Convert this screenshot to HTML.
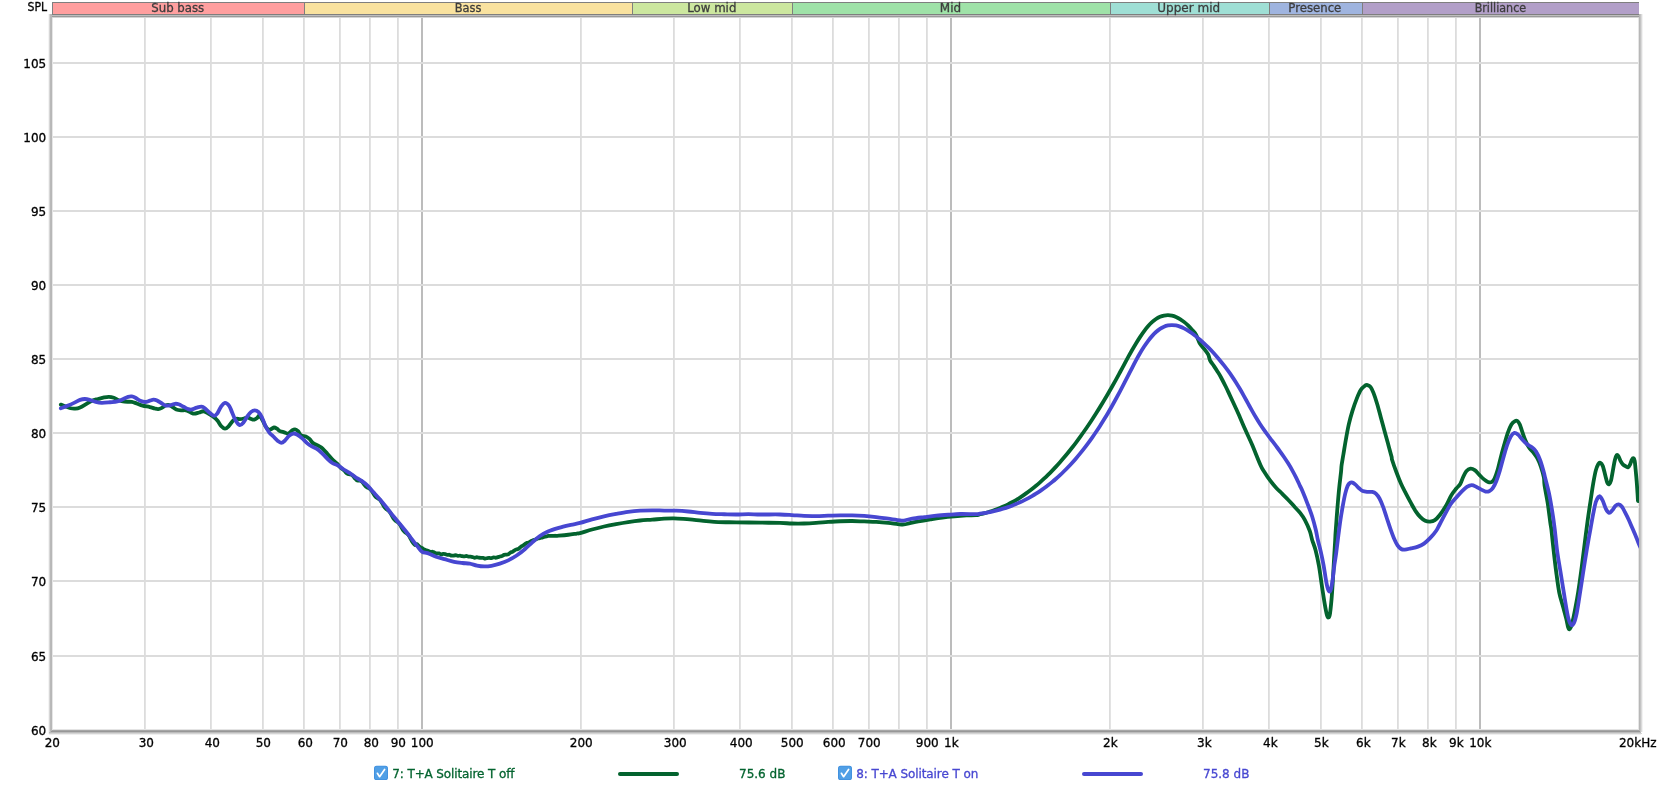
<!DOCTYPE html>
<html lang="en">
<head>
<meta charset="utf-8">
<title>SPL</title>
<style>
html,body{margin:0;padding:0;background:#fff;}
body{width:1665px;height:790px;overflow:hidden;position:relative;}
svg{position:absolute;left:0;top:0;display:block;will-change:transform;}
text{font-family:"DejaVu Sans", "Liberation Sans", sans-serif;font-size:12px;stroke-width:0.3px;paint-order:stroke fill;}
.ax{fill:#000;stroke:#000;}
.band{fill:#3c3c3c;stroke:#3c3c3c;}
.lg{fill:#03632e;stroke:#03632e;}
.lb{fill:#4747d1;stroke:#4747d1;}
</style>
</head>
<body>
<svg width="1665" height="790" viewBox="0 0 1665 790">
<rect x="0" y="0" width="1665" height="790" fill="#ffffff"/>
<g shape-rendering="crispEdges">
<rect x="144" y="17" width="1" height="713" fill="#dcdcdc"/><rect x="145" y="17" width="1" height="713" fill="#e3e3e3"/>
<rect x="210" y="17" width="1" height="713" fill="#dcdcdc"/><rect x="211" y="17" width="1" height="713" fill="#e3e3e3"/>
<rect x="262" y="17" width="1" height="713" fill="#dcdcdc"/><rect x="263" y="17" width="1" height="713" fill="#e3e3e3"/>
<rect x="303" y="17" width="1" height="713" fill="#dcdcdc"/><rect x="304" y="17" width="1" height="713" fill="#e3e3e3"/>
<rect x="339" y="17" width="1" height="713" fill="#dcdcdc"/><rect x="340" y="17" width="1" height="713" fill="#e3e3e3"/>
<rect x="369" y="17" width="1" height="713" fill="#dcdcdc"/><rect x="370" y="17" width="1" height="713" fill="#e3e3e3"/>
<rect x="397" y="17" width="1" height="713" fill="#dcdcdc"/><rect x="398" y="17" width="1" height="713" fill="#e3e3e3"/>
<rect x="580" y="17" width="1" height="713" fill="#dcdcdc"/><rect x="581" y="17" width="1" height="713" fill="#e3e3e3"/>
<rect x="673" y="17" width="1" height="713" fill="#dcdcdc"/><rect x="674" y="17" width="1" height="713" fill="#e3e3e3"/>
<rect x="739" y="17" width="1" height="713" fill="#dcdcdc"/><rect x="740" y="17" width="1" height="713" fill="#e3e3e3"/>
<rect x="791" y="17" width="1" height="713" fill="#dcdcdc"/><rect x="792" y="17" width="1" height="713" fill="#e3e3e3"/>
<rect x="832" y="17" width="1" height="713" fill="#dcdcdc"/><rect x="833" y="17" width="1" height="713" fill="#e3e3e3"/>
<rect x="868" y="17" width="1" height="713" fill="#dcdcdc"/><rect x="869" y="17" width="1" height="713" fill="#e3e3e3"/>
<rect x="898" y="17" width="1" height="713" fill="#dcdcdc"/><rect x="899" y="17" width="1" height="713" fill="#e3e3e3"/>
<rect x="926" y="17" width="1" height="713" fill="#dcdcdc"/><rect x="927" y="17" width="1" height="713" fill="#e3e3e3"/>
<rect x="1109" y="17" width="1" height="713" fill="#dcdcdc"/><rect x="1110" y="17" width="1" height="713" fill="#e3e3e3"/>
<rect x="1202" y="17" width="1" height="713" fill="#dcdcdc"/><rect x="1203" y="17" width="1" height="713" fill="#e3e3e3"/>
<rect x="1268" y="17" width="1" height="713" fill="#dcdcdc"/><rect x="1269" y="17" width="1" height="713" fill="#e3e3e3"/>
<rect x="1320" y="17" width="1" height="713" fill="#dcdcdc"/><rect x="1321" y="17" width="1" height="713" fill="#e3e3e3"/>
<rect x="1361" y="17" width="1" height="713" fill="#dcdcdc"/><rect x="1362" y="17" width="1" height="713" fill="#e3e3e3"/>
<rect x="1397" y="17" width="1" height="713" fill="#dcdcdc"/><rect x="1398" y="17" width="1" height="713" fill="#e3e3e3"/>
<rect x="1427" y="17" width="1" height="713" fill="#dcdcdc"/><rect x="1428" y="17" width="1" height="713" fill="#e3e3e3"/>
<rect x="1455" y="17" width="1" height="713" fill="#dcdcdc"/><rect x="1456" y="17" width="1" height="713" fill="#e3e3e3"/>
<rect x="421" y="17" width="2" height="713" fill="#bcbcbc"/>
<rect x="950" y="17" width="2" height="713" fill="#bcbcbc"/>
<rect x="1479" y="17" width="2" height="713" fill="#bcbcbc"/>
<rect x="52" y="62" width="1587" height="2" fill="#dcdcdc"/>
<rect x="52" y="136" width="1587" height="2" fill="#dcdcdc"/>
<rect x="52" y="210" width="1587" height="2" fill="#dcdcdc"/>
<rect x="52" y="284" width="1587" height="2" fill="#dcdcdc"/>
<rect x="52" y="358" width="1587" height="2" fill="#dcdcdc"/>
<rect x="52" y="432" width="1587" height="2" fill="#dcdcdc"/>
<rect x="52" y="506" width="1587" height="2" fill="#dcdcdc"/>
<rect x="52" y="580" width="1587" height="2" fill="#dcdcdc"/>
<rect x="52" y="655" width="1587" height="2" fill="#dcdcdc"/>
</g>
<g shape-rendering="crispEdges">
<rect x="48" y="14" width="1" height="720" fill="#f4f4f4"/>
<rect x="49" y="14" width="1" height="720" fill="#d6d6d6"/>
<rect x="50" y="14" width="1" height="720" fill="#b9b9b9"/>
<rect x="51" y="14" width="1" height="720" fill="#b7b7b7"/>
<rect x="52" y="14" width="1" height="720" fill="#e6e6e6"/>
<rect x="1638" y="14" width="1" height="718" fill="#e6e6e6"/>
<rect x="1639" y="14" width="1" height="718" fill="#b7b7b7"/>
<rect x="1640" y="14" width="1" height="718" fill="#c4c4c4"/>
<rect x="1641" y="14" width="1" height="718" fill="#dadada"/>
<rect x="1642" y="14" width="1" height="718" fill="#f2f2f2"/>
<rect x="52" y="15" width="1587" height="1" fill="#bebebe"/>
<rect x="52" y="16" width="1587" height="1" fill="#9a9a9a"/>
<rect x="52" y="17" width="1587" height="1" fill="#d4d4d4"/>
<rect x="53" y="729" width="1585" height="1" fill="#e4e4e4"/>
<rect x="52" y="730" width="1587" height="1" fill="#a6a6a6"/>
<rect x="51" y="731" width="1589" height="1" fill="#979797"/>
<rect x="49" y="732" width="1592" height="1" fill="#bcbcbc"/>
<rect x="49" y="733" width="1593" height="1" fill="#d4d4d4"/>
<rect x="49" y="734" width="1592" height="1" fill="#efefef"/>
</g>
<clipPath id="pc"><rect x="52" y="17" width="1587" height="713"/></clipPath>
<g clip-path="url(#pc)" fill="none" stroke-width="3.8" stroke-linejoin="round" stroke-linecap="round">
<path stroke="#03632e" d="M60.82 404.65C61.62 404.95 64.03 405.86 65.63 406.46C67.23 407.06 68.83 407.90 70.44 408.26C72.05 408.62 73.66 408.76 75.26 408.62C76.87 408.48 78.27 408.18 80.07 407.42C81.87 406.66 84.08 405.17 86.08 404.05C88.08 402.93 90.09 401.53 92.09 400.69C94.09 399.85 96.11 399.54 98.11 399.00C100.11 398.46 102.32 397.80 104.12 397.44C105.92 397.08 107.33 396.78 108.93 396.84C110.53 396.90 112.14 397.24 113.74 397.80C115.34 398.36 116.75 399.56 118.55 400.20C120.35 400.84 122.36 401.37 124.56 401.65C126.77 401.93 129.78 401.59 131.78 401.89C133.78 402.19 134.79 402.83 136.59 403.45C138.39 404.07 140.39 405.02 142.60 405.62C144.81 406.22 147.81 406.58 149.82 407.06C151.82 407.54 153.23 408.16 154.63 408.50C156.03 408.84 157.04 409.20 158.24 409.10C159.44 409.00 160.65 408.50 161.85 407.90C163.05 407.30 164.25 405.98 165.45 405.50C166.65 405.02 167.86 404.76 169.06 405.02C170.26 405.28 171.47 406.32 172.67 407.06C173.87 407.80 174.88 408.92 176.28 409.46C177.68 410.00 179.49 410.17 181.09 410.31C182.69 410.45 184.30 409.95 185.90 410.31C187.50 410.67 189.31 411.91 190.71 412.47C192.11 413.03 192.92 413.67 194.32 413.67C195.72 413.67 197.63 412.87 199.13 412.47C200.63 412.07 201.94 411.17 203.34 411.27C204.74 411.37 206.05 412.27 207.55 413.07C209.05 413.87 210.76 414.88 212.36 416.08C213.96 417.28 215.67 418.59 217.17 420.29C218.67 421.99 220.08 424.90 221.38 426.30C222.68 427.70 223.78 428.71 224.98 428.71C226.18 428.71 227.29 427.60 228.59 426.30C229.89 425.00 231.50 422.15 232.80 420.89C234.10 419.63 235.26 419.03 236.41 418.73C237.56 418.43 238.44 419.13 239.69 419.09C240.94 419.05 242.60 418.78 243.90 418.48C245.20 418.18 246.40 417.24 247.50 417.28C248.60 417.32 249.41 418.33 250.51 418.73C251.61 419.13 253.02 419.83 254.12 419.69C255.22 419.55 256.23 418.58 257.13 417.88C258.03 417.18 258.63 415.08 259.53 415.48C260.43 415.88 261.54 418.49 262.54 420.29C263.54 422.09 264.64 424.80 265.54 426.30C266.44 427.80 267.15 428.77 267.95 429.31C268.75 429.85 269.35 429.85 270.35 429.55C271.35 429.25 272.86 427.64 273.96 427.50C275.06 427.36 275.97 428.11 276.97 428.71C277.97 429.31 278.78 430.51 279.98 431.11C281.18 431.71 282.79 431.92 284.19 432.32C285.59 432.72 287.09 433.82 288.39 433.52C289.69 433.22 290.90 431.21 292.00 430.51C293.10 429.81 294.01 429.21 295.01 429.31C296.01 429.41 297.02 430.11 298.02 431.11C299.02 432.11 299.72 434.42 301.02 435.32C302.32 436.22 304.43 435.92 305.83 436.52C307.23 437.12 308.24 437.83 309.44 438.93C310.64 440.03 311.45 441.94 313.05 443.14C314.65 444.34 317.46 445.25 319.06 446.15C320.66 447.05 321.27 447.25 322.67 448.55C324.07 449.85 325.88 452.16 327.48 453.96C329.08 455.76 330.69 457.77 332.29 459.37C333.89 460.97 335.70 462.18 337.10 463.58C338.50 464.98 339.53 466.64 340.71 467.79C341.89 468.94 343.36 469.74 344.20 470.49C345.04 471.24 345.23 471.77 345.75 472.31C346.27 472.85 346.78 473.39 347.30 473.71C347.82 474.03 348.33 474.10 348.85 474.22C349.37 474.34 349.88 474.28 350.40 474.42C350.92 474.56 351.43 474.69 351.95 475.05C352.47 475.41 352.98 475.98 353.50 476.57C354.02 477.16 354.53 478.01 355.05 478.59C355.57 479.17 356.08 479.72 356.60 480.06C357.12 480.40 357.63 480.53 358.15 480.63C358.67 480.73 359.18 480.61 359.70 480.68C360.22 480.75 360.73 480.74 361.25 481.07C361.77 481.40 362.28 482.02 362.80 482.64C363.32 483.25 363.83 484.11 364.35 484.76C364.87 485.41 365.38 486.10 365.90 486.56C366.42 487.02 366.93 487.25 367.45 487.55C367.97 487.85 368.48 488.05 369.00 488.37C369.52 488.69 370.03 488.97 370.55 489.49C371.07 490.01 371.58 490.71 372.10 491.47C372.62 492.23 373.13 493.23 373.65 494.04C374.17 494.86 374.68 495.73 375.20 496.36C375.72 496.99 376.23 497.44 376.75 497.82C377.27 498.20 377.78 498.33 378.30 498.66C378.82 498.99 379.33 499.25 379.85 499.79C380.37 500.33 380.88 501.07 381.40 501.87C381.92 502.67 382.43 503.72 382.95 504.59C383.47 505.46 383.98 506.39 384.50 507.10C385.02 507.81 385.53 508.35 386.05 508.84C386.57 509.32 387.08 509.59 387.60 510.01C388.12 510.43 388.63 510.76 389.15 511.35C389.67 511.94 390.18 512.71 390.70 513.53C391.22 514.35 391.73 515.40 392.25 516.29C392.77 517.17 393.28 518.13 393.80 518.84C394.32 519.55 394.83 520.11 395.35 520.57C395.87 521.03 396.38 521.23 396.90 521.60C397.42 521.97 397.93 522.24 398.45 522.77C398.97 523.30 399.48 523.98 400.00 524.76C400.52 525.54 401.03 526.58 401.55 527.46C402.07 528.35 402.58 529.33 403.10 530.07C403.62 530.81 404.13 531.39 404.65 531.88C405.17 532.37 405.68 532.59 406.20 532.98C406.72 533.38 407.23 533.70 407.75 534.25C408.27 534.80 408.78 535.50 409.30 536.31C409.82 537.12 410.33 538.18 410.85 539.11C411.37 540.04 411.88 541.09 412.40 541.88C412.92 542.67 413.43 543.34 413.95 543.88C414.47 544.42 415.02 545.09 415.50 545.13C415.98 545.17 416.42 544.10 416.84 544.12C417.26 544.14 417.46 544.78 418.00 545.27C418.54 545.76 419.40 546.57 420.10 547.05C420.80 547.53 421.50 547.74 422.20 548.16C422.90 548.58 423.60 549.22 424.30 549.57C425.00 549.93 425.70 550.05 426.40 550.29C427.10 550.53 427.80 550.74 428.50 551.01C429.20 551.28 429.90 551.80 430.60 551.93C431.30 552.06 432.00 551.64 432.70 551.77C433.40 551.90 434.10 552.43 434.80 552.69C435.50 552.96 436.20 553.23 436.90 553.36C437.60 553.49 438.30 553.30 439.00 553.46C439.70 553.62 440.40 554.22 441.10 554.30C441.80 554.38 442.50 553.97 443.20 553.95C443.90 553.93 444.60 554.03 445.30 554.18C446.00 554.33 446.70 554.75 447.40 554.85C448.10 554.95 448.80 554.65 449.50 554.78C450.20 554.91 450.90 555.49 451.60 555.62C452.30 555.75 453.00 555.63 453.70 555.57C454.40 555.51 455.10 555.21 455.80 555.26C456.50 555.31 457.20 555.80 457.90 555.86C458.60 555.92 459.30 555.58 460.00 555.63C460.70 555.68 461.40 556.04 462.10 556.18C462.80 556.32 463.50 556.49 464.20 556.46C464.90 556.43 465.60 555.97 466.30 556.00C467.00 556.03 467.70 556.54 468.40 556.65C469.10 556.76 469.80 556.58 470.50 556.65C471.20 556.72 471.90 556.87 472.60 557.05C473.30 557.23 474.00 557.73 474.70 557.76C475.40 557.79 476.10 557.27 476.80 557.26C477.50 557.25 478.20 557.61 478.90 557.71C479.60 557.82 480.30 557.87 481.00 557.89C481.70 557.91 482.40 557.74 483.10 557.85C483.80 557.96 484.50 558.54 485.20 558.57C485.90 558.60 486.60 558.13 487.30 558.03C488.00 557.93 488.70 557.94 489.40 557.95C490.10 557.96 490.80 558.17 491.50 558.07C492.20 557.97 492.90 557.40 493.60 557.35C494.30 557.30 495.00 557.77 495.70 557.74C496.40 557.71 497.10 557.40 497.80 557.19C498.50 556.98 499.20 556.67 499.90 556.48C500.60 556.29 501.30 556.34 502.00 556.07C502.70 555.80 503.40 555.08 504.10 554.85C504.80 554.62 505.50 554.78 506.20 554.67C506.90 554.56 507.60 554.53 508.30 554.18C509.00 553.83 509.70 552.96 510.40 552.57C511.10 552.18 511.80 552.21 512.50 551.83C513.20 551.45 513.90 550.71 514.60 550.30C515.30 549.89 516.00 549.67 516.70 549.39C517.40 549.11 518.10 549.05 518.80 548.60C519.50 548.15 520.20 547.21 520.90 546.71C521.60 546.21 522.30 546.04 523.00 545.59C523.70 545.14 524.40 544.46 525.10 543.99C525.80 543.52 526.50 543.04 527.20 542.76C527.90 542.48 528.60 542.60 529.30 542.30C530.00 542.00 530.70 541.32 531.40 540.96C532.10 540.60 532.80 540.41 533.50 540.16C534.20 539.91 534.90 539.74 535.60 539.45C536.30 539.16 537.00 538.66 537.70 538.44C538.40 538.22 539.10 538.30 539.80 538.15C540.50 538.00 541.20 537.75 541.90 537.55C542.60 537.35 543.30 537.12 544.00 536.95C544.70 536.78 545.40 536.69 546.10 536.50C546.80 536.31 547.50 535.90 548.20 535.80C548.90 535.70 549.60 535.87 550.30 535.88C551.00 535.89 551.70 535.90 552.40 535.88C553.10 535.86 553.80 535.80 554.50 535.78C555.20 535.76 555.90 535.79 556.60 535.78C557.30 535.76 556.74 535.86 558.70 535.69C560.66 535.52 565.36 535.10 568.37 534.74C571.38 534.38 574.85 533.81 576.79 533.54C578.73 533.27 577.46 533.81 580.00 533.14C582.54 532.47 588.02 530.63 592.03 529.53C596.04 528.43 600.04 527.42 604.05 526.52C608.06 525.62 612.07 524.86 616.08 524.12C620.09 523.38 624.10 522.67 628.11 522.07C632.12 521.47 636.12 520.91 640.13 520.51C644.14 520.11 648.15 519.97 652.16 519.67C656.17 519.37 660.58 518.91 664.19 518.71C667.80 518.51 670.60 518.43 673.81 518.47C677.02 518.51 680.02 518.71 683.43 518.95C686.84 519.19 690.44 519.55 694.25 519.91C698.06 520.27 702.27 520.75 706.28 521.11C710.29 521.47 713.29 521.87 718.30 522.07C723.31 522.27 729.32 522.22 736.34 522.32C743.36 522.42 753.12 522.58 760.40 522.68C767.68 522.78 774.73 522.78 780.00 522.92C785.27 523.06 788.02 523.42 792.03 523.52C796.04 523.62 800.04 523.62 804.05 523.52C808.06 523.42 812.07 523.18 816.08 522.92C820.09 522.66 824.10 522.23 828.11 521.95C832.12 521.67 836.12 521.39 840.13 521.23C844.14 521.07 848.15 520.95 852.16 520.99C856.17 521.03 860.18 521.31 864.19 521.47C868.20 521.63 872.20 521.71 876.21 521.95C880.22 522.19 884.63 522.56 888.24 522.92C891.85 523.28 895.25 523.86 897.86 524.12C900.47 524.38 901.87 524.64 903.87 524.48C905.88 524.32 907.49 523.68 909.89 523.16C912.29 522.64 914.89 521.99 918.30 521.35C921.71 520.71 926.32 519.95 930.33 519.31C934.34 518.67 938.35 518.00 942.36 517.50C946.37 517.00 950.37 516.64 954.38 516.30C958.39 515.96 962.81 515.66 966.41 515.46C970.01 515.26 973.74 515.31 976.00 515.11C978.26 514.91 978.67 514.57 980.00 514.27C981.33 513.97 982.67 513.64 984.00 513.30C985.33 512.95 986.67 512.59 988.00 512.20C989.33 511.81 990.67 511.40 992.00 510.96C993.33 510.52 994.67 510.05 996.00 509.56C997.33 509.07 998.67 508.55 1000.00 508.00C1001.33 507.45 1002.67 506.88 1004.00 506.28C1005.33 505.68 1006.67 505.04 1008.00 504.38C1009.33 503.72 1010.67 503.02 1012.00 502.29C1013.33 501.56 1014.67 500.81 1016.00 500.02C1017.33 499.23 1018.67 498.41 1020.00 497.55C1021.33 496.69 1022.67 495.81 1024.00 494.89C1025.33 493.97 1026.67 493.02 1028.00 492.04C1029.33 491.06 1030.67 490.04 1032.00 488.99C1033.33 487.94 1034.67 486.87 1036.00 485.76C1037.33 484.65 1038.67 483.50 1040.00 482.32C1041.33 481.14 1042.67 479.93 1044.00 478.69C1045.33 477.45 1046.67 476.17 1048.00 474.86C1049.33 473.55 1050.67 472.21 1052.00 470.84C1053.33 469.47 1054.67 468.06 1056.00 466.62C1057.33 465.18 1058.67 463.71 1060.00 462.20C1061.33 460.69 1062.67 459.15 1064.00 457.58C1065.33 456.01 1066.67 454.40 1068.00 452.76C1069.33 451.12 1070.67 449.45 1072.00 447.75C1073.33 446.05 1074.67 444.31 1076.00 442.54C1077.33 440.77 1078.67 438.97 1080.00 437.13C1081.33 435.29 1082.67 433.42 1084.00 431.52C1085.33 429.62 1086.67 427.69 1088.00 425.72C1089.33 423.75 1090.67 421.75 1092.00 419.72C1093.33 417.69 1094.67 415.62 1096.00 413.52C1097.33 411.42 1098.67 409.29 1100.00 407.13C1101.33 404.97 1102.67 402.77 1104.00 400.54C1105.33 398.31 1106.67 396.05 1108.00 393.75C1109.33 391.45 1110.67 389.13 1112.00 386.77C1113.33 384.41 1114.67 382.01 1116.00 379.59C1117.33 377.17 1118.67 374.70 1120.00 372.24C1121.33 369.78 1122.67 367.28 1124.00 364.81C1125.33 362.34 1126.67 359.86 1128.00 357.44C1129.33 355.02 1130.67 352.61 1132.00 350.28C1133.33 347.95 1134.67 345.65 1136.00 343.45C1137.33 341.25 1138.67 339.11 1140.00 337.09C1141.33 335.07 1142.67 333.12 1144.00 331.33C1145.33 329.53 1146.67 327.84 1148.00 326.32C1149.33 324.80 1150.67 323.40 1152.00 322.18C1153.33 320.96 1154.67 319.91 1156.00 319.02C1157.33 318.12 1158.67 317.39 1160.00 316.81C1161.33 316.23 1162.67 315.81 1164.00 315.54C1165.33 315.27 1166.67 315.15 1168.00 315.16C1169.33 315.18 1170.67 315.33 1172.00 315.63C1173.33 315.93 1174.67 316.37 1176.00 316.93C1177.33 317.50 1178.67 318.20 1180.00 319.02C1181.33 319.84 1182.67 320.79 1184.00 321.86C1185.33 322.93 1186.67 324.13 1188.00 325.43C1189.33 326.73 1190.67 328.16 1192.00 329.68C1193.33 331.20 1194.68 332.26 1196.00 334.58C1197.32 336.89 1198.51 341.14 1199.90 343.57C1201.29 346.00 1202.97 347.28 1204.36 349.14C1205.75 351.00 1207.31 352.85 1208.26 354.71C1209.21 356.57 1209.11 358.42 1210.04 360.28C1210.97 362.14 1212.59 364.00 1213.83 365.86C1215.07 367.72 1216.29 369.57 1217.45 371.43C1218.61 373.29 1219.38 374.40 1220.79 377.00C1222.20 379.60 1224.52 384.17 1225.94 387.02C1227.36 389.87 1227.53 390.32 1229.30 394.11C1231.07 397.90 1234.80 405.85 1236.58 409.75C1238.36 413.65 1238.43 413.90 1240.00 417.50C1241.57 421.10 1244.01 426.82 1246.01 431.33C1248.01 435.84 1249.62 438.95 1252.03 444.56C1254.43 450.17 1258.44 460.53 1260.44 465.01C1262.44 469.49 1262.44 468.86 1264.05 471.43C1265.65 474.00 1268.07 477.74 1270.07 480.44C1272.07 483.14 1274.08 485.46 1276.08 487.66C1278.08 489.87 1280.09 491.67 1282.09 493.67C1284.09 495.68 1286.11 497.58 1288.11 499.69C1290.11 501.80 1292.12 504.10 1294.12 506.30C1296.12 508.50 1298.33 510.61 1300.13 512.92C1301.93 515.22 1303.34 517.12 1304.94 520.13C1306.54 523.14 1308.55 527.65 1309.75 530.96C1310.95 534.27 1311.20 536.78 1312.17 540.00C1313.14 543.22 1314.44 545.89 1315.58 550.26C1316.72 554.63 1317.95 560.32 1319.00 566.21C1320.05 572.10 1320.90 579.31 1321.85 585.58C1322.80 591.85 1323.85 598.88 1324.70 603.82C1325.56 608.76 1326.37 612.93 1326.98 615.21C1327.59 617.49 1327.88 617.59 1328.35 617.49C1328.82 617.39 1329.30 617.68 1329.83 614.64C1330.36 611.60 1331.07 604.48 1331.54 599.26C1332.01 594.04 1332.30 589.38 1332.68 583.30C1333.06 577.22 1333.40 570.01 1333.82 562.79C1334.24 555.57 1334.89 545.11 1335.19 540.00C1335.49 534.89 1335.24 537.47 1335.61 532.16C1335.98 526.85 1336.81 515.53 1337.41 508.11C1338.01 500.69 1338.62 493.67 1339.22 487.66C1339.82 481.65 1340.62 475.80 1341.02 472.03C1341.42 468.25 1341.22 467.98 1341.62 465.01C1342.02 462.04 1342.73 458.40 1343.43 454.19C1344.13 449.98 1344.93 444.76 1345.83 439.75C1346.73 434.74 1347.74 428.93 1348.84 424.12C1349.94 419.31 1351.15 415.10 1352.45 410.89C1353.75 406.68 1355.26 402.37 1356.66 398.86C1358.06 395.35 1359.47 392.04 1360.87 389.84C1362.27 387.63 1363.98 386.43 1365.08 385.63C1366.18 384.83 1366.58 384.83 1367.48 385.03C1368.38 385.23 1369.49 385.54 1370.49 386.84C1371.49 388.14 1372.39 390.05 1373.49 392.85C1374.59 395.66 1375.90 399.66 1377.10 403.67C1378.30 407.68 1379.51 412.49 1380.71 416.90C1381.91 421.31 1383.12 425.72 1384.32 430.13C1385.52 434.54 1386.73 438.95 1387.93 443.36C1389.13 447.77 1390.83 453.82 1391.53 456.59C1392.23 459.36 1391.33 457.43 1392.13 460.00C1392.93 462.57 1394.84 468.02 1396.34 472.03C1397.84 476.04 1399.55 480.44 1401.15 484.05C1402.76 487.66 1404.37 490.56 1405.97 493.67C1407.58 496.78 1409.18 499.78 1410.78 502.69C1412.38 505.60 1413.99 508.70 1415.59 511.11C1417.19 513.52 1418.80 515.53 1420.40 517.13C1422.00 518.73 1423.61 519.99 1425.21 520.73C1426.81 521.47 1428.42 521.68 1430.02 521.58C1431.62 521.48 1433.17 521.27 1434.83 520.13C1436.49 518.99 1438.06 517.24 1440.00 514.72C1441.94 512.20 1444.58 508.23 1446.46 505.01C1448.34 501.79 1449.67 498.10 1451.27 495.39C1452.87 492.68 1454.58 490.67 1456.08 488.77C1457.58 486.87 1459.09 485.96 1460.29 483.96C1461.49 481.96 1462.30 478.86 1463.30 476.75C1464.30 474.64 1465.10 472.67 1466.30 471.33C1467.50 469.99 1469.11 468.89 1470.51 468.69C1471.91 468.49 1473.32 469.19 1474.72 470.13C1476.12 471.07 1477.43 472.84 1478.93 474.34C1480.43 475.84 1482.24 477.89 1483.74 479.15C1485.24 480.41 1486.65 481.42 1487.95 481.92C1489.25 482.42 1490.46 482.72 1491.56 482.16C1492.66 481.60 1493.56 480.56 1494.56 478.55C1495.56 476.55 1496.57 473.54 1497.57 470.13C1498.57 466.72 1499.48 462.32 1500.58 458.11C1501.68 453.90 1502.99 449.09 1504.19 444.88C1505.39 440.67 1506.59 436.26 1507.79 432.85C1508.99 429.44 1510.20 426.39 1511.40 424.43C1512.60 422.47 1514.01 421.62 1515.01 421.06C1516.01 420.50 1516.61 420.50 1517.41 421.06C1518.21 421.62 1519.02 422.67 1519.82 424.43C1520.62 426.19 1521.32 429.04 1522.22 431.65C1523.12 434.26 1524.13 437.46 1525.23 440.07C1526.33 442.68 1527.54 445.28 1528.84 447.28C1530.14 449.28 1531.65 450.28 1533.05 452.09C1534.45 453.89 1535.96 455.71 1537.26 458.11C1538.56 460.51 1539.77 463.31 1540.87 466.52C1541.97 469.73 1543.25 474.18 1543.87 477.35C1544.48 480.53 1543.92 481.25 1544.56 485.57C1545.20 489.89 1546.77 497.17 1547.72 503.29C1548.67 509.41 1549.63 517.83 1550.25 522.28C1550.87 526.73 1550.87 525.23 1551.44 530.00C1552.01 534.77 1552.88 543.92 1553.67 550.88C1554.46 557.84 1555.24 564.81 1556.17 571.77C1557.10 578.73 1558.10 586.85 1559.24 592.65C1560.38 598.45 1561.81 602.16 1562.99 606.57C1564.17 610.98 1565.48 615.62 1566.34 619.10C1567.20 622.58 1567.57 625.80 1568.15 627.45C1568.73 629.10 1569.15 629.68 1569.82 628.98C1570.49 628.28 1571.25 626.78 1572.18 623.28C1573.11 619.78 1574.36 613.30 1575.38 607.96C1576.40 602.62 1577.36 597.29 1578.31 591.26C1579.26 585.23 1580.18 578.50 1581.09 571.77C1581.99 565.04 1582.66 559.34 1583.74 550.88C1584.82 542.42 1586.42 529.58 1587.59 521.01C1588.76 512.44 1589.81 505.82 1590.76 499.49C1591.71 493.16 1592.45 487.89 1593.29 483.04C1594.13 478.19 1594.98 473.55 1595.82 470.38C1596.66 467.21 1597.61 465.32 1598.35 464.05C1599.09 462.78 1599.51 462.46 1600.25 462.78C1600.99 463.10 1601.93 463.84 1602.78 465.95C1603.62 468.06 1604.58 472.70 1605.32 475.44C1606.06 478.18 1606.59 480.93 1607.22 482.41C1607.85 483.89 1608.48 484.62 1609.11 484.30C1609.74 483.98 1610.38 482.83 1611.01 480.51C1611.64 478.19 1612.28 473.76 1612.91 470.38C1613.54 467.00 1614.18 462.78 1614.81 460.25C1615.44 457.72 1616.08 455.82 1616.71 455.19C1617.34 454.56 1617.98 455.51 1618.61 456.46C1619.24 457.41 1619.77 459.52 1620.51 460.89C1621.25 462.26 1622.09 463.73 1623.04 464.68C1623.99 465.63 1625.36 466.16 1626.20 466.58C1627.04 467.00 1627.47 467.54 1628.10 467.22C1628.73 466.90 1629.37 465.95 1630.00 464.68C1630.63 463.41 1631.31 460.68 1631.90 459.62C1632.49 458.56 1633.08 458.14 1633.54 458.35C1634.00 458.56 1634.34 459.10 1634.68 460.89C1635.02 462.68 1635.23 465.63 1635.57 469.11C1635.91 472.59 1636.37 477.55 1636.71 481.77C1637.05 485.99 1637.38 491.22 1637.59 494.43C1637.80 497.64 1637.91 499.91 1637.97 501.01"/>
<path stroke="#4747d1" d="M60.82 408.26C62.02 407.80 65.84 406.40 68.04 405.50C70.25 404.60 72.05 403.79 74.05 402.85C76.05 401.91 78.26 400.48 80.07 399.84C81.88 399.20 83.28 399.00 84.88 399.00C86.48 399.00 87.89 399.36 89.69 399.84C91.49 400.32 93.70 401.39 95.70 401.89C97.70 402.39 99.30 402.79 101.71 402.85C104.11 402.91 107.52 402.49 110.13 402.25C112.74 402.01 115.14 401.95 117.35 401.41C119.55 400.87 121.56 399.76 123.36 399.00C125.16 398.24 126.77 397.26 128.17 396.84C129.57 396.42 130.58 396.32 131.78 396.48C132.98 396.64 133.99 397.10 135.39 397.80C136.79 398.50 138.60 399.99 140.20 400.69C141.80 401.39 143.41 402.01 145.01 402.01C146.61 402.01 148.42 401.09 149.82 400.69C151.22 400.29 152.23 399.64 153.43 399.60C154.63 399.56 155.64 399.80 157.04 400.44C158.44 401.08 160.45 402.59 161.85 403.45C163.25 404.31 164.05 405.32 165.45 405.62C166.85 405.92 168.65 405.56 170.26 405.26C171.87 404.96 173.68 403.97 175.08 403.81C176.48 403.65 177.28 403.81 178.68 404.29C180.08 404.77 181.89 405.90 183.49 406.70C185.09 407.50 186.90 408.64 188.30 409.10C189.70 409.56 190.51 409.70 191.91 409.46C193.31 409.22 195.12 408.12 196.72 407.66C198.32 407.20 200.13 406.54 201.53 406.70C202.93 406.86 203.74 407.56 205.14 408.62C206.54 409.68 208.45 411.87 209.95 413.07C211.45 414.27 212.96 415.74 214.16 415.84C215.36 415.94 216.07 415.13 217.17 413.67C218.27 412.21 219.48 408.86 220.78 407.06C222.08 405.26 223.58 403.05 224.98 402.85C226.38 402.65 228.04 404.36 229.19 405.86C230.34 407.36 230.82 409.47 231.87 411.87C232.92 414.27 234.18 418.09 235.48 420.29C236.78 422.50 238.39 424.70 239.69 425.10C240.99 425.50 242.00 424.19 243.30 422.69C244.60 421.19 246.20 417.88 247.50 416.08C248.80 414.28 249.91 412.83 251.11 411.87C252.31 410.91 253.52 410.31 254.72 410.31C255.92 410.31 257.13 410.71 258.33 411.87C259.53 413.03 260.74 414.88 261.94 417.28C263.14 419.68 264.34 423.79 265.54 426.30C266.74 428.81 267.85 430.62 269.15 432.32C270.45 434.02 271.96 435.12 273.36 436.52C274.76 437.92 276.27 439.69 277.57 440.73C278.87 441.77 279.98 442.78 281.18 442.78C282.38 442.78 283.49 441.87 284.79 440.73C286.09 439.59 287.60 437.12 289.00 435.92C290.40 434.72 291.81 433.72 293.21 433.52C294.61 433.32 295.91 433.92 297.41 434.72C298.91 435.52 300.62 436.93 302.22 438.33C303.83 439.73 305.44 441.80 307.04 443.14C308.65 444.48 310.15 445.39 311.85 446.39C313.55 447.39 315.46 447.89 317.26 449.15C319.06 450.41 320.97 452.36 322.67 453.96C324.37 455.56 325.88 457.27 327.48 458.77C329.08 460.27 330.59 461.88 332.29 462.98C333.99 464.08 335.90 464.39 337.70 465.39C339.50 466.39 341.21 467.80 343.11 469.00C345.01 470.20 347.11 471.26 349.13 472.60C351.15 473.94 353.24 475.72 355.26 477.06C357.28 478.40 359.27 479.27 361.27 480.67C363.27 482.07 365.27 483.58 367.28 485.48C369.28 487.38 371.30 489.88 373.30 492.09C375.31 494.29 377.31 496.40 379.31 498.71C381.31 501.01 383.32 503.42 385.32 505.92C387.32 508.43 389.32 511.23 391.33 513.74C393.33 516.25 394.90 518.00 397.35 520.96C399.80 523.92 403.56 528.43 406.01 531.49C408.46 534.55 410.02 536.70 412.03 539.31C414.03 541.92 416.34 545.02 418.04 547.13C419.74 549.24 420.65 550.94 422.25 551.94C423.85 552.94 425.36 552.34 427.66 553.14C429.97 553.94 433.27 555.75 436.08 556.75C438.89 557.75 441.49 558.31 444.50 559.15C447.51 559.99 451.11 561.16 454.12 561.80C457.13 562.44 459.94 562.70 462.54 563.00C465.15 563.30 467.35 563.18 469.75 563.60C472.15 564.02 474.56 565.07 476.97 565.53C479.38 565.99 481.79 566.33 484.19 566.37C486.59 566.41 488.79 566.23 491.40 565.77C494.00 565.31 497.01 564.50 499.82 563.60C502.63 562.70 505.43 561.69 508.24 560.35C511.05 559.01 513.85 557.44 516.66 555.54C519.47 553.64 522.48 551.13 525.08 548.93C527.69 546.73 529.88 544.43 532.29 542.32C534.69 540.22 536.90 538.11 539.51 536.30C542.12 534.49 544.72 532.89 547.93 531.49C551.14 530.09 554.94 528.98 558.75 527.88C562.56 526.78 567.24 525.71 570.78 524.88C574.32 524.05 576.46 523.85 580.00 522.92C583.54 521.99 588.02 520.41 592.03 519.31C596.04 518.21 600.04 517.20 604.05 516.30C608.06 515.40 612.07 514.64 616.08 513.90C620.09 513.16 624.10 512.39 628.11 511.85C632.12 511.31 636.12 510.91 640.13 510.65C644.14 510.39 648.15 510.31 652.16 510.29C656.17 510.27 660.18 510.47 664.19 510.53C668.20 510.59 672.20 510.49 676.21 510.65C680.22 510.81 684.23 511.11 688.24 511.49C692.25 511.87 696.25 512.53 700.26 512.93C704.27 513.33 708.28 513.68 712.29 513.90C716.30 514.12 720.31 514.16 724.32 514.26C728.33 514.36 732.33 514.52 736.34 514.50C740.35 514.48 744.36 514.14 748.37 514.14C752.38 514.14 755.13 514.44 760.40 514.50C765.67 514.56 774.73 514.40 780.00 514.50C785.27 514.60 788.02 514.86 792.03 515.10C796.04 515.34 800.04 515.78 804.05 515.94C808.06 516.10 812.07 516.10 816.08 516.06C820.09 516.02 824.10 515.82 828.11 515.70C832.12 515.58 836.12 515.40 840.13 515.34C844.14 515.28 848.15 515.24 852.16 515.34C856.17 515.44 860.18 515.64 864.19 515.94C868.20 516.24 872.20 516.68 876.21 517.14C880.22 517.60 884.23 518.19 888.24 518.71C892.25 519.23 897.65 519.97 900.26 520.27C902.87 520.57 901.87 520.77 903.87 520.51C905.88 520.25 908.88 519.27 912.29 518.71C915.70 518.15 920.31 517.64 924.32 517.14C928.33 516.64 932.33 516.10 936.34 515.70C940.35 515.30 944.36 515.02 948.37 514.74C952.38 514.46 955.79 514.11 960.40 514.02C965.00 513.93 972.73 514.25 976.00 514.20C979.27 514.15 978.67 513.88 980.00 513.70C981.33 513.52 982.67 513.32 984.00 513.10C985.33 512.88 986.67 512.64 988.00 512.39C989.33 512.14 990.67 511.87 992.00 511.58C993.33 511.29 994.67 510.98 996.00 510.65C997.33 510.32 998.67 509.97 1000.00 509.60C1001.33 509.23 1002.67 508.85 1004.00 508.43C1005.33 508.01 1006.67 507.57 1008.00 507.11C1009.33 506.65 1010.67 506.17 1012.00 505.66C1013.33 505.15 1014.67 504.62 1016.00 504.06C1017.33 503.50 1018.67 502.92 1020.00 502.31C1021.33 501.70 1022.67 501.07 1024.00 500.41C1025.33 499.75 1026.67 499.05 1028.00 498.33C1029.33 497.61 1030.67 496.87 1032.00 496.09C1033.33 495.31 1034.67 494.51 1036.00 493.67C1037.33 492.83 1038.67 491.96 1040.00 491.06C1041.33 490.16 1042.67 489.23 1044.00 488.27C1045.33 487.31 1046.67 486.32 1048.00 485.29C1049.33 484.26 1050.67 483.20 1052.00 482.10C1053.33 481.00 1054.67 479.87 1056.00 478.70C1057.33 477.53 1058.67 476.33 1060.00 475.09C1061.33 473.85 1062.67 472.57 1064.00 471.26C1065.33 469.95 1066.67 468.60 1068.00 467.21C1069.33 465.82 1070.67 464.40 1072.00 462.93C1073.33 461.46 1074.67 459.95 1076.00 458.40C1077.33 456.85 1078.67 455.27 1080.00 453.64C1081.33 452.01 1082.67 450.33 1084.00 448.62C1085.33 446.91 1086.67 445.15 1088.00 443.35C1089.33 441.55 1090.67 439.70 1092.00 437.81C1093.33 435.92 1094.67 433.99 1096.00 432.01C1097.33 430.03 1098.67 428.00 1100.00 425.93C1101.33 423.86 1102.67 421.74 1104.00 419.57C1105.33 417.40 1106.67 415.19 1108.00 412.93C1109.33 410.67 1110.67 408.35 1112.00 405.99C1113.33 403.63 1114.67 401.21 1116.00 398.77C1117.33 396.32 1118.67 393.83 1120.00 391.32C1121.33 388.81 1122.67 386.25 1124.00 383.68C1125.33 381.11 1126.67 378.50 1128.00 375.89C1129.33 373.28 1130.67 370.63 1132.00 368.05C1133.33 365.47 1134.67 362.87 1136.00 360.40C1137.33 357.93 1138.67 355.53 1140.00 353.26C1141.33 350.99 1142.67 348.82 1144.00 346.79C1145.33 344.76 1146.67 342.84 1148.00 341.06C1149.33 339.28 1150.67 337.62 1152.00 336.12C1153.33 334.62 1154.67 333.24 1156.00 332.03C1157.33 330.82 1158.67 329.76 1160.00 328.87C1161.33 327.98 1162.67 327.25 1164.00 326.68C1165.33 326.11 1166.67 325.71 1168.00 325.44C1169.33 325.17 1170.67 325.07 1172.00 325.08C1173.33 325.09 1174.67 325.24 1176.00 325.49C1177.33 325.75 1178.67 326.13 1180.00 326.61C1181.33 327.09 1182.67 327.67 1184.00 328.34C1185.33 329.00 1186.67 329.77 1188.00 330.60C1189.33 331.43 1190.67 332.34 1192.00 333.30C1193.33 334.26 1194.67 335.29 1196.00 336.36C1197.33 337.43 1198.67 338.55 1200.00 339.71C1201.33 340.87 1202.67 342.06 1204.00 343.31C1205.33 344.56 1206.67 345.85 1208.00 347.18C1209.33 348.51 1210.67 349.89 1212.00 351.32C1213.33 352.75 1214.67 354.21 1216.00 355.73C1217.33 357.25 1218.67 358.82 1220.00 360.43C1221.33 362.04 1222.67 363.70 1224.00 365.41C1225.33 367.12 1226.67 368.88 1228.00 370.71C1229.33 372.54 1230.67 374.41 1232.00 376.37C1233.33 378.33 1234.67 380.35 1236.00 382.47C1237.33 384.59 1238.67 386.80 1240.00 389.08C1241.33 391.36 1242.67 393.75 1244.00 396.13C1245.33 398.51 1246.67 400.97 1248.00 403.38C1249.33 405.79 1250.67 408.24 1252.00 410.60C1253.33 412.96 1254.67 415.31 1256.00 417.54C1257.33 419.77 1258.67 421.92 1260.00 423.98C1261.33 426.04 1262.67 427.98 1264.00 429.88C1265.33 431.78 1266.67 433.59 1268.00 435.39C1269.33 437.19 1270.67 438.93 1272.00 440.69C1273.33 442.45 1274.67 444.17 1276.00 445.94C1277.33 447.71 1278.67 449.47 1280.00 451.31C1281.33 453.15 1282.67 455.01 1284.00 456.97C1285.33 458.93 1286.67 460.94 1288.00 463.08C1289.33 465.22 1290.67 467.43 1292.00 469.81C1293.33 472.19 1294.67 474.67 1296.00 477.34C1297.33 480.01 1298.91 483.51 1300.00 485.83C1301.09 488.15 1301.32 488.36 1302.54 491.27C1303.76 494.18 1305.75 499.09 1307.35 503.30C1308.95 507.51 1310.76 512.11 1312.16 516.52C1313.56 520.93 1314.82 525.84 1315.77 529.75C1316.72 533.66 1317.04 536.39 1317.86 540.00C1318.68 543.61 1319.76 547.22 1320.71 551.40C1321.66 555.58 1322.70 560.42 1323.56 565.07C1324.41 569.72 1325.17 575.52 1325.84 579.32C1326.50 583.12 1326.98 585.83 1327.55 587.86C1328.12 589.89 1328.69 591.32 1329.26 591.51C1329.83 591.70 1330.40 591.03 1330.97 589.00C1331.54 586.97 1332.11 583.31 1332.68 579.32C1333.25 575.33 1333.82 569.34 1334.39 565.07C1334.96 560.80 1335.49 558.16 1336.10 553.68C1336.70 549.20 1337.30 543.76 1338.02 538.17C1338.74 532.58 1339.62 525.54 1340.42 520.13C1341.22 514.72 1342.03 510.11 1342.83 505.70C1343.63 501.29 1344.43 496.98 1345.23 493.67C1346.03 490.36 1346.84 487.66 1347.64 485.86C1348.44 484.06 1349.24 483.39 1350.04 482.85C1350.84 482.31 1351.55 482.31 1352.45 482.61C1353.35 482.91 1354.35 483.71 1355.45 484.65C1356.55 485.59 1357.86 487.20 1359.06 488.26C1360.26 489.32 1361.27 490.43 1362.67 491.03C1364.07 491.63 1365.88 491.73 1367.48 491.87C1369.08 492.01 1370.89 491.57 1372.29 491.87C1373.69 492.17 1374.70 492.57 1375.90 493.67C1377.10 494.77 1378.31 496.28 1379.51 498.48C1380.71 500.69 1381.91 503.69 1383.11 506.90C1384.31 510.11 1385.52 514.12 1386.72 517.73C1387.92 521.34 1389.13 525.14 1390.33 528.55C1391.53 531.96 1392.74 535.36 1393.94 538.17C1395.14 540.98 1396.35 543.59 1397.55 545.39C1398.75 547.19 1399.95 548.30 1401.15 549.00C1402.35 549.70 1403.15 549.70 1404.76 549.60C1406.37 549.50 1408.58 548.89 1410.78 548.39C1412.98 547.89 1415.79 547.39 1417.99 546.59C1420.19 545.79 1421.99 544.98 1424.00 543.58C1426.01 542.18 1428.01 540.27 1430.02 538.17C1432.03 536.07 1434.37 533.37 1436.03 530.96C1437.69 528.56 1437.66 528.07 1440.00 523.74C1442.34 519.41 1447.39 509.33 1450.07 505.01C1452.75 500.69 1454.08 500.10 1456.08 497.79C1458.08 495.49 1460.29 492.98 1462.09 491.18C1463.89 489.38 1465.30 487.97 1466.90 486.97C1468.50 485.97 1470.11 485.17 1471.71 485.17C1473.31 485.17 1474.92 486.23 1476.52 486.97C1478.12 487.71 1479.83 488.86 1481.33 489.62C1482.83 490.38 1484.24 491.28 1485.54 491.54C1486.84 491.80 1487.95 491.74 1489.15 491.18C1490.35 490.62 1491.56 489.87 1492.76 488.17C1493.96 486.47 1495.17 483.97 1496.37 480.96C1497.57 477.95 1498.78 474.14 1499.98 470.13C1501.18 466.12 1502.38 461.11 1503.58 456.90C1504.78 452.69 1505.99 448.29 1507.19 444.88C1508.39 441.47 1509.60 438.46 1510.80 436.46C1512.00 434.45 1513.21 433.15 1514.41 432.85C1515.61 432.55 1516.72 433.55 1518.02 434.65C1519.32 435.75 1520.72 437.85 1522.22 439.46C1523.72 441.06 1525.43 442.98 1527.04 444.28C1528.64 445.58 1530.35 446.08 1531.85 447.28C1533.35 448.48 1534.66 449.29 1536.06 451.49C1537.46 453.69 1538.96 457.00 1540.26 460.51C1541.56 464.02 1543.05 469.63 1543.87 472.54C1544.69 475.45 1544.34 474.53 1545.19 477.97C1546.04 481.41 1547.83 487.67 1548.99 493.16C1550.15 498.65 1551.20 504.98 1552.15 510.89C1553.10 516.80 1553.85 521.95 1554.68 528.61C1555.51 535.27 1556.18 543.69 1557.15 550.88C1558.12 558.07 1559.38 564.81 1560.49 571.77C1561.60 578.73 1562.86 586.62 1563.83 592.65C1564.80 598.68 1565.55 603.55 1566.34 607.96C1567.13 612.37 1567.75 616.27 1568.56 619.10C1569.37 621.93 1570.33 624.25 1571.21 624.95C1572.09 625.65 1572.94 625.18 1573.85 623.28C1574.75 621.38 1575.71 617.94 1576.64 613.53C1577.57 609.12 1578.49 602.62 1579.42 596.82C1580.35 591.02 1581.28 584.76 1582.21 578.73C1583.14 572.70 1584.06 566.43 1584.99 560.63C1585.92 554.83 1586.82 549.47 1587.78 543.92C1588.74 538.37 1589.84 532.42 1590.76 527.34C1591.68 522.26 1592.45 517.64 1593.29 513.42C1594.13 509.20 1594.98 504.77 1595.82 502.03C1596.66 499.29 1597.61 497.85 1598.35 496.96C1599.09 496.07 1599.51 496.08 1600.25 496.71C1600.99 497.34 1601.83 498.71 1602.78 500.76C1603.73 502.81 1604.89 506.99 1605.95 508.99C1607.01 510.99 1608.05 512.57 1609.11 512.78C1610.16 512.99 1611.22 511.41 1612.28 510.25C1613.34 509.09 1614.38 506.81 1615.44 505.82C1616.50 504.83 1617.55 504.19 1618.61 504.30C1619.66 504.41 1620.71 505.15 1621.77 506.46C1622.83 507.77 1623.78 509.93 1624.94 512.15C1626.10 514.37 1627.47 517.01 1628.73 519.75C1629.99 522.49 1631.26 525.66 1632.53 528.61C1633.80 531.56 1635.27 534.92 1636.33 537.47C1637.39 540.02 1637.89 541.68 1638.87 543.92C1639.85 546.15 1641.65 549.72 1642.21 550.88"/>
</g>
<g shape-rendering="crispEdges">
<rect x="52" y="2" width="1587" height="13" fill="#7f7f7f"/>
<rect x="53" y="3" width="251" height="11" fill="#ff9f9f"/>
<rect x="305" y="3" width="327" height="11" fill="#f9e29f"/>
<rect x="633" y="3" width="159" height="11" fill="#cce79f"/>
<rect x="793" y="3" width="317" height="11" fill="#9fe2a8"/>
<rect x="1111" y="3" width="158" height="11" fill="#9fdfd5"/>
<rect x="1270" y="3" width="92" height="11" fill="#9fb4df"/>
<rect x="1363" y="3" width="276" height="11" fill="#b29fc8"/>
</g>
<text class="band" x="151.25" y="11.8" textLength="53.0" lengthAdjust="spacingAndGlyphs">Sub bass</text>
<text class="band" x="454.80" y="11.8" textLength="26.7" lengthAdjust="spacingAndGlyphs">Bass</text>
<text class="band" x="687.20" y="11.8" textLength="49.2" lengthAdjust="spacingAndGlyphs">Low mid</text>
<text class="band" x="939.85" y="11.8" textLength="21.3" lengthAdjust="spacingAndGlyphs">Mid</text>
<text class="band" x="1157.30" y="11.8" textLength="62.8" lengthAdjust="spacingAndGlyphs">Upper mid</text>
<text class="band" x="1288.30" y="11.8" textLength="53.0" lengthAdjust="spacingAndGlyphs">Presence</text>
<text class="band" x="1474.65" y="11.8" textLength="51.5" lengthAdjust="spacingAndGlyphs">Brilliance</text>
<text class="ax" x="27.6" y="11" textLength="19.6" lengthAdjust="spacingAndGlyphs">SPL</text>
<text class="ax" x="46.2" y="735.1" text-anchor="end">60</text>
<text class="ax" x="46.2" y="661.1" text-anchor="end">65</text>
<text class="ax" x="46.2" y="586.1" text-anchor="end">70</text>
<text class="ax" x="46.2" y="512.1" text-anchor="end">75</text>
<text class="ax" x="46.2" y="438.1" text-anchor="end">80</text>
<text class="ax" x="46.2" y="364.1" text-anchor="end">85</text>
<text class="ax" x="46.2" y="290.1" text-anchor="end">90</text>
<text class="ax" x="46.2" y="216.1" text-anchor="end">95</text>
<text class="ax" x="46.2" y="142.1" text-anchor="end">100</text>
<text class="ax" x="46.2" y="68.1" text-anchor="end">105</text>
<text class="ax" x="52.3" y="747" text-anchor="middle">20</text>
<text class="ax" x="146.3" y="747" text-anchor="middle">30</text>
<text class="ax" x="212.3" y="747" text-anchor="middle">40</text>
<text class="ax" x="263.3" y="747" text-anchor="middle">50</text>
<text class="ax" x="305.3" y="747" text-anchor="middle">60</text>
<text class="ax" x="340.3" y="747" text-anchor="middle">70</text>
<text class="ax" x="371.3" y="747" text-anchor="middle">80</text>
<text class="ax" x="398.3" y="747" text-anchor="middle">90</text>
<text class="ax" x="422.3" y="747" text-anchor="middle">100</text>
<text class="ax" x="581.3" y="747" text-anchor="middle">200</text>
<text class="ax" x="675.3" y="747" text-anchor="middle">300</text>
<text class="ax" x="741.3" y="747" text-anchor="middle">400</text>
<text class="ax" x="792.3" y="747" text-anchor="middle">500</text>
<text class="ax" x="834.3" y="747" text-anchor="middle">600</text>
<text class="ax" x="869.3" y="747" text-anchor="middle">700</text>
<text class="ax" x="927.3" y="747" text-anchor="middle">900</text>
<text class="ax" x="951.3" y="747" text-anchor="middle">1k</text>
<text class="ax" x="1110.3" y="747" text-anchor="middle">2k</text>
<text class="ax" x="1204.3" y="747" text-anchor="middle">3k</text>
<text class="ax" x="1270.3" y="747" text-anchor="middle">4k</text>
<text class="ax" x="1321.3" y="747" text-anchor="middle">5k</text>
<text class="ax" x="1363.3" y="747" text-anchor="middle">6k</text>
<text class="ax" x="1398.3" y="747" text-anchor="middle">7k</text>
<text class="ax" x="1429.3" y="747" text-anchor="middle">8k</text>
<text class="ax" x="1456.3" y="747" text-anchor="middle">9k</text>
<text class="ax" x="1480.3" y="747" text-anchor="middle">10k</text>
<text class="ax" x="1637.7" y="747" text-anchor="middle">20kHz</text>
<rect x="374.0" y="765.8" width="14" height="14.2" rx="2.6" ry="2.6" fill="#3f8fde"/>
<rect x="374.8" y="766.6" width="12.4" height="12.6" rx="1.9" ry="1.9" fill="#509fe6"/>
<path d="M377.40 773.30 L379.60 776.70 L384.60 769.40" fill="none" stroke="#fff" stroke-width="1.7" stroke-linecap="round" stroke-linejoin="round"/>
<text x="392.3" y="777.7" letter-spacing="-0.12" class="lg">7: T+A Solitaire T off</text>
<line x1="620" y1="774" x2="677" y2="774" stroke="#03632e" stroke-width="4" stroke-linecap="round"/>
<text x="739" y="777.7" class="lg">75.6 dB</text>
<rect x="838.0" y="765.8" width="14" height="14.2" rx="2.6" ry="2.6" fill="#3f8fde"/>
<rect x="838.8" y="766.6" width="12.4" height="12.6" rx="1.9" ry="1.9" fill="#509fe6"/>
<path d="M841.40 773.30 L843.60 776.70 L848.60 769.40" fill="none" stroke="#fff" stroke-width="1.7" stroke-linecap="round" stroke-linejoin="round"/>
<text x="856.2" y="777.7" letter-spacing="-0.09" class="lb">8: T+A Solitaire T on</text>
<line x1="1084" y1="774" x2="1141" y2="774" stroke="#4747d1" stroke-width="4" stroke-linecap="round"/>
<text x="1203" y="777.7" class="lb">75.8 dB</text>
</svg>
</body>
</html>
